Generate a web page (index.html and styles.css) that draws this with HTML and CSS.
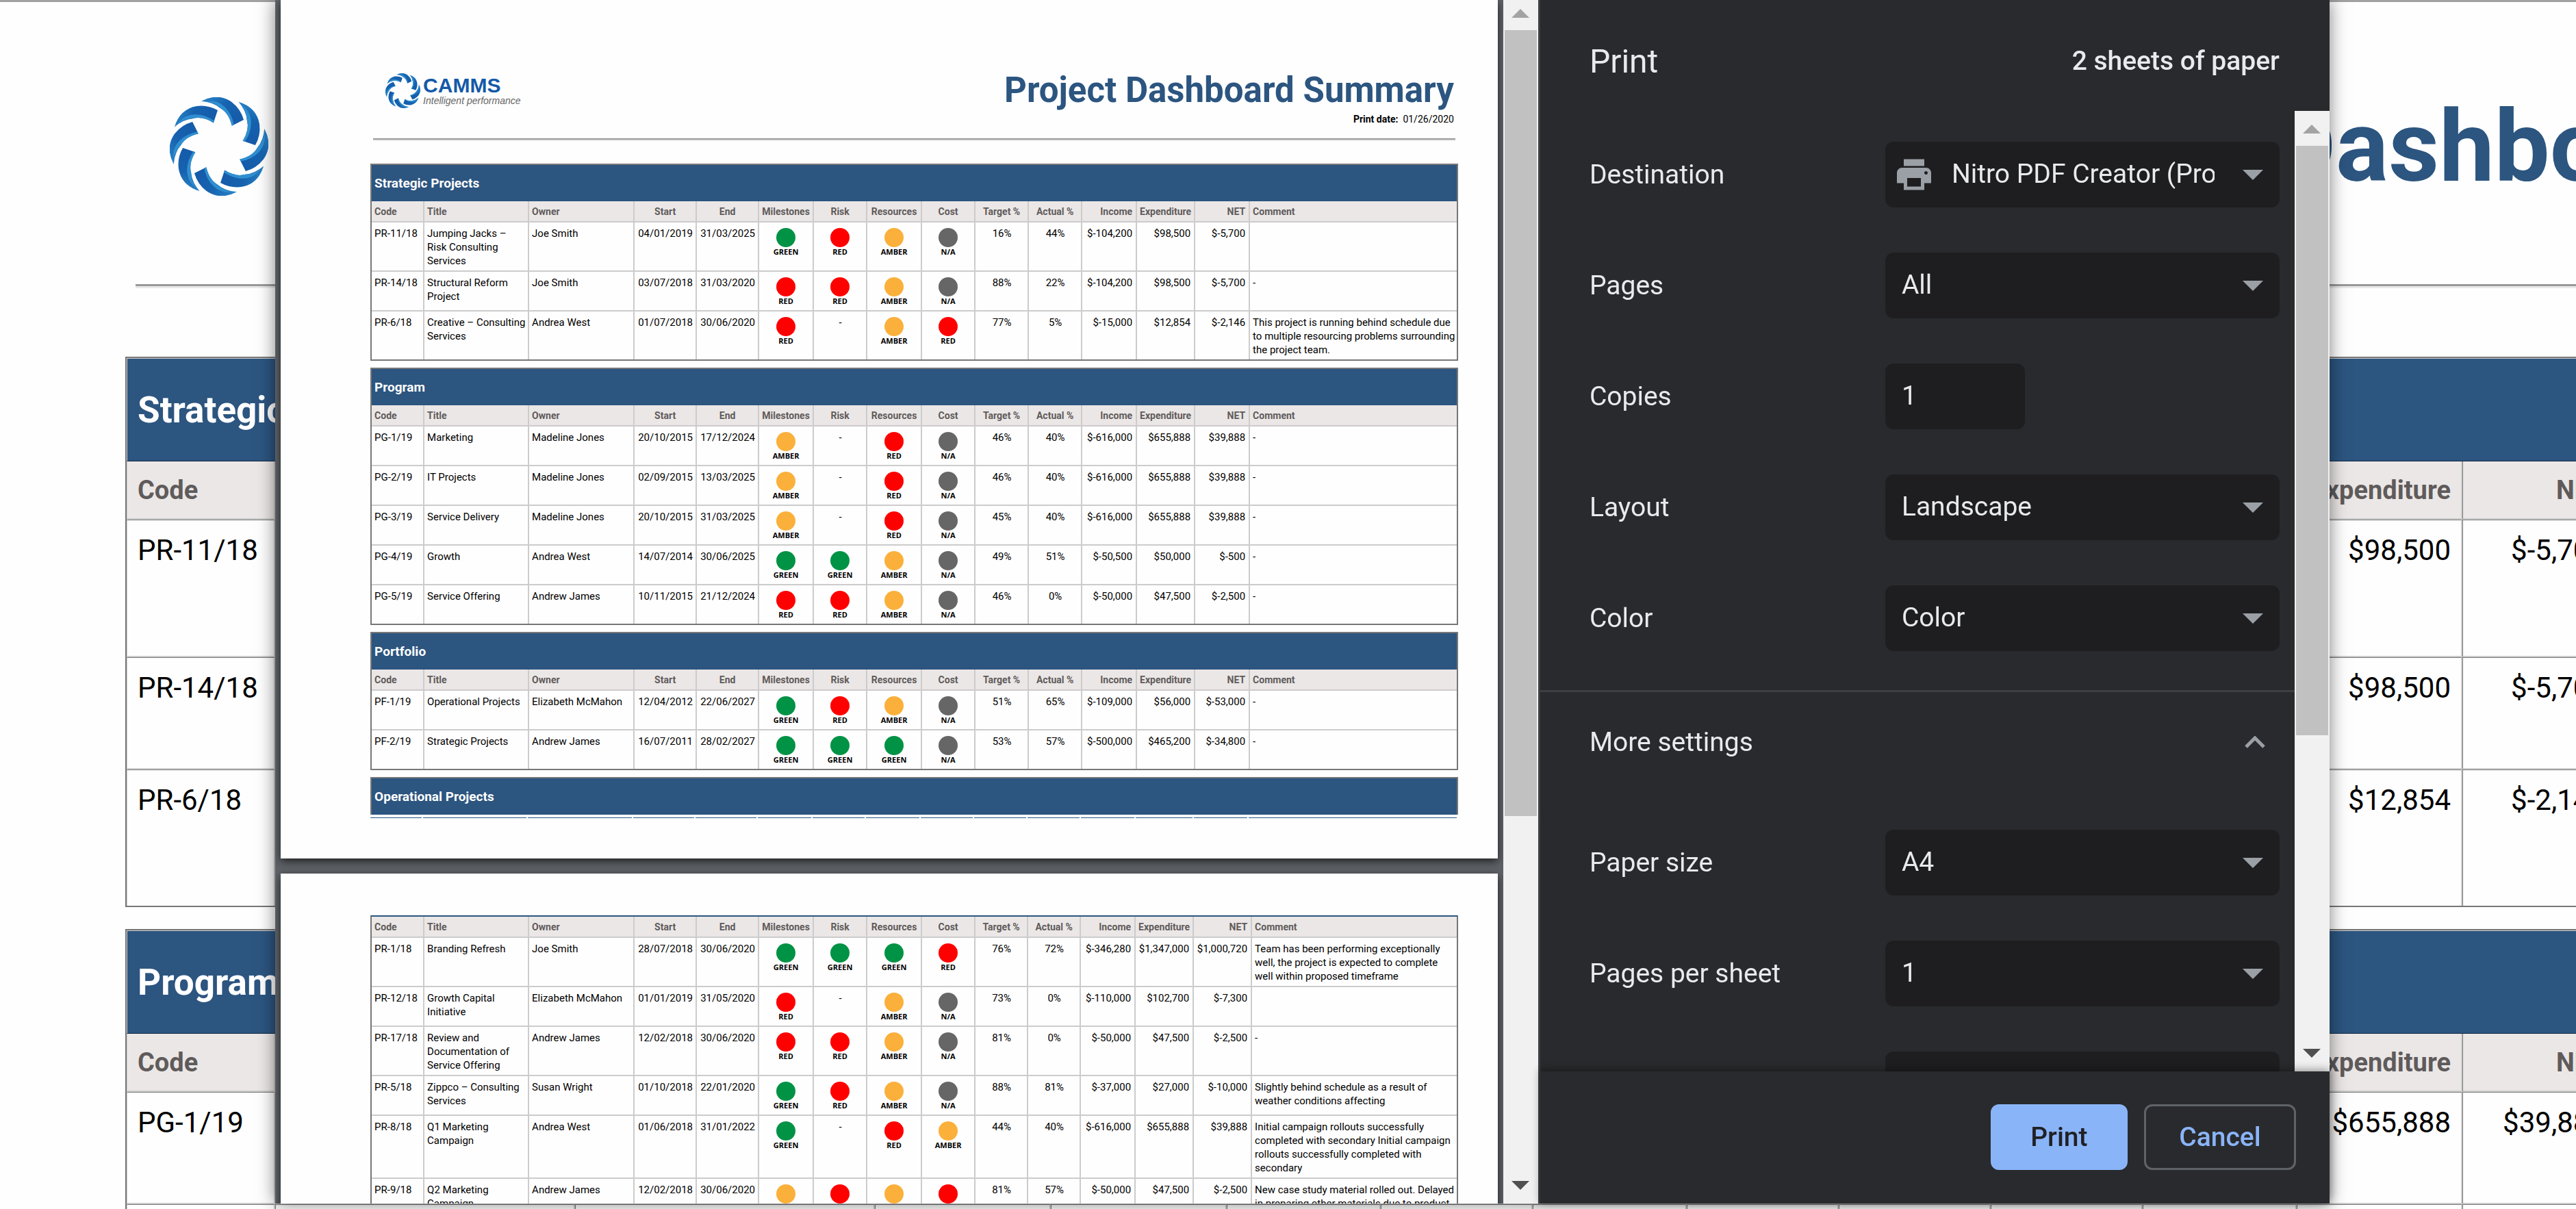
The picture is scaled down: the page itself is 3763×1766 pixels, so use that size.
FILE: index.html
```html
<!DOCTYPE html>
<html lang="en">

<head>
    <meta charset="UTF-8">
    <meta name="viewport" content="width=device-width, initial-scale=1.0">
    <title>Project Dashboard Summary</title>
    <link rel="stylesheet" href="styles.css">
</head>

<body>
    <svg width="0" height="0" class="defs" aria-hidden="true">
        <defs>
            <linearGradient id="bladeFill" x1="0" y1="1" x2="1" y2="0">
                <stop offset="0" stop-color="#1459a8" />
                <stop offset="0.6" stop-color="#1763b0" />
                <stop offset="1" stop-color="#2a86c8" />
            </linearGradient>
            <g id="blade">
                <path fill="url(#bladeFill)" d="M46-18Q55-1 45 13Q38 22 27 25L21 13Q34 10 39 1Q45-6 46-18Z" />
                <path fill="#2f8fd0" d="M46-14Q48-2 40 6Q33 13 22 15L21 13Q34 10 39 1Q45-5 46-14Z" />
            </g>
            <symbol id="swirl" viewBox="-50 -50 100 100">
                <use href="#blade" />
                <use href="#blade" transform="rotate(45)" />
                <use href="#blade" transform="rotate(90)" />
                <use href="#blade" transform="rotate(135)" />
                <use href="#blade" transform="rotate(180)" />
                <use href="#blade" transform="rotate(225)" />
                <use href="#blade" transform="rotate(270)" />
                <use href="#blade" transform="rotate(315)" />
            </symbol>
        </defs>
    </svg>

    <main class="report large">
        <header class="report-header">
            <div class="logo">
                <svg class="logo-mark"><use href="#swirl" /></svg>
            </div>
            <div class="report-title">
                <h1>Project Dashboard Summary</h1>
            </div>
        </header>
        <hr>
        <div data-groups="strategic program"></div>
    </main>

    <div class="overlay">
        <div class="dialog" role="dialog" aria-label="Print">
            <section class="preview">
                <div class="pages">
                    <div class="page report">
                        <header class="report-header">
                            <div class="logo">
                                <svg class="logo-mark"><use href="#swirl" /></svg>
                                <div class="logo-text">
                                    <span class="logo-name">CAMMS</span>
                                    <span class="logo-tag">Intelligent performance</span>
                                </div>
                            </div>
                            <div class="report-title">
                                <h2>Project Dashboard Summary</h2>
                                <p><b>Print date:</b>&nbsp; 01/26/2020</p>
                            </div>
                        </header>
                        <hr>
                        <div data-groups="strategic program portfolio operational"></div>
                    </div>
                    <div class="page report second">
                        <div data-groups="operationalRows"></div>
                    </div>
                </div>
                <div class="scrollbar">
                    <span class="arrow up"></span>
                    <span class="thumb"></span>
                    <span class="arrow down"></span>
                </div>
            </section>

            <form class="sidebar">
                <div class="sidebar-header">
                    <h2>Print</h2>
                    <span>2 sheets of paper</span>
                </div>
                <div class="sidebar-body">
                    <div class="settings">
                        <div class="row">
                            <label for="destination">Destination</label>
                            <div class="select with-icon">
                                <svg class="printer" viewBox="2 3 20 18">
                                    <path fill="#9aa0a6" d="M19 8H5c-1.660 0-3 1.340-3 3v6h4v4h12v-4h4v-6c0-1.660-1.340-3-3-3zm-3 11H8v-5h8v5zm3-7c-.55 0-1-.45-1-1s.45-1 1-1 1 .45 1 1-.45 1-1 1zm-1-9H6v4h12V3z" />
                                </svg>
                                <select id="destination">
                                    <option>Nitro PDF Creator (Pro 12)</option>
                                </select>
                            </div>
                        </div>
                        <div class="row">
                            <label for="pages">Pages</label>
                            <div class="select">
                                <select id="pages">
                                    <option>All</option>
                                    <option>Custom</option>
                                </select>
                            </div>
                        </div>
                        <div class="row">
                            <label for="copies">Copies</label>
                            <div class="field"><input id="copies" type="text" value="1"></div>
                        </div>
                        <div class="row">
                            <label for="layout">Layout</label>
                            <div class="select">
                                <select id="layout">
                                    <option>Landscape</option>
                                    <option>Portrait</option>
                                </select>
                            </div>
                        </div>
                        <div class="row">
                            <label for="color">Color</label>
                            <div class="select">
                                <select id="color">
                                    <option>Color</option>
                                    <option>Black and white</option>
                                </select>
                            </div>
                        </div>
                        <button type="button" class="more">
                            More settings
                            <svg class="chevron" viewBox="0 0 30 18">
                                <path d="M2 16L15 3L28 16" fill="none" stroke="#9aa0a6" stroke-width="5" />
                            </svg>
                        </button>
                        <div class="row">
                            <label for="paper">Paper size</label>
                            <div class="select">
                                <select id="paper">
                                    <option>A4</option>
                                    <option>Letter</option>
                                </select>
                            </div>
                        </div>
                        <div class="row">
                            <label for="persheet">Pages per sheet</label>
                            <div class="select">
                                <select id="persheet">
                                    <option>1</option>
                                    <option>2</option>
                                </select>
                            </div>
                        </div>
                        <div class="row">
                            <div class="select last">
                                <select aria-label="Margins"></select>
                            </div>
                        </div>
                    </div>
                    <div class="scrollbar">
                        <span class="arrow up"></span>
                        <span class="thumb"></span>
                        <span class="arrow down"></span>
                    </div>
                </div>
                <div class="sidebar-footer">
                    <button type="button" class="btn primary">Print</button>
                    <button type="button" class="btn">Cancel</button>
                </div>
            </form>
        </div>
    </div>

    <script src="script.js"></script>
</body>

</html>
```
FILE: styles.css
```css
* {
    box-sizing: border-box;
}

body {
    margin: 0;
    height: 100vh;
    overflow: hidden;
    background: #fefefe;
    font-family: Roboto, sans-serif;
    color: #000;
}

h1,
h2,
p {
    margin: 0;
}

.defs {
    display: block;
}

/* report, shared by the page behind and the print preview */
.report-header {
    display: flex;
    justify-content: space-between;
    align-items: flex-start;
    margin: 0 6px 0 4px;
}

.logo {
    display: flex;
    gap: 4px;
    margin: 6px 0 0 18px;
}

.logo-mark {
    width: 51px;
    height: 51px;
}

.logo-text {
    display: flex;
    flex-direction: column;
    padding-top: 4px;
    font-family: "Liberation Sans", sans-serif;
    white-space: nowrap;
}

.logo-name {
    font-size: 30px;
    line-height: 28px;
    font-weight: bold;
    color: #1459a8;
}

.logo-tag {
    font-size: 14px;
    line-height: 16px;
    font-style: italic;
    color: #666;
}

.report-title {
    text-align: right;
    white-space: nowrap;
}

.report-title h1,
.report-title h2 {
    font-size: 51px;
    line-height: 62px;
    font-weight: bold;
    color: #2c5580;
}

.report-title p {
    margin-top: 1px;
    font-size: 14px;
    line-height: 20px;
}

.report hr {
    height: 4px;
    margin: 18px 4px 33px;
    border: 0;
    border-top: 2px solid #999;
    background: #e9e9e9;
}

.report table {
    width: 100%;
    margin-bottom: 10px;
    table-layout: fixed;
    border: 2px solid #777;
    border-collapse: separate;
    border-spacing: 0;
    font-size: 15px;
    line-height: 20px;
}

.report th,
.report td {
    padding: 6px 3px 4px 4px;
    border-right: 2px solid #ccc;
    border-bottom: 2px solid #ccc;
    text-align: left;
    vertical-align: top;
}

.report tr > :last-child {
    padding-right: 0;
    border-right: 0;
}

.report tbody tr:last-child td {
    border-bottom: 0;
}

.report th {
    height: 31px;
    padding: 0 4px;
    background: #ebe7e6;
    color: #5f5b5b;
    font-size: 14px;
    vertical-align: middle;
    white-space: nowrap;
}

.report th.group {
    height: 53px;
    border-bottom: 0;
    background: #2c5580;
    color: #fff;
    font-size: 19px;
}

.report .mid {
    text-align: center;
    white-space: nowrap;
}

.report .num {
    padding-right: 5px;
    text-align: right;
    white-space: nowrap;
}

.report td.status {
    padding: 8px 0 6px;
    text-align: center;
    font: bold 11px/14px "Open Sans", sans-serif;
}

.dot {
    display: block;
    width: 28px;
    height: 28px;
    margin: 0 auto;
    border-radius: 50%;
}

.dot.GREEN {
    background: #009245;
}

.dot.RED {
    background: #fe0000;
}

.dot.AMBER {
    background: #fbb03b;
}

.dot.NA {
    background: #666;
}

.c-code {
    width: 77px;
}

.c-title {
    width: 153px;
}

.c-owner {
    width: 154px;
}

.c-start,
.c-end {
    width: 91px;
}

.c-milestones,
.c-resources,
.c-income,
.c-net {
    width: 80px;
}

.c-risk,
.c-cost,
.c-target,
.c-actual {
    width: 78px;
}

.c-expenditure {
    width: 85px;
}

/* group heading whose rows continue on the next page */
.report table.open {
    margin-bottom: 4px;
    border-bottom: 0;
}

.report table.cut {
    margin: 0;
    border: 0;
}

.report .cut td {
    height: 1px;
    padding: 0;
    border-right: 2px solid #fff;
    background: #2c5580;
}

.second .c-target,
.second .c-actual {
    width: 77px;
}

.second .c-net {
    width: 85px;
}

.report.second table {
    border-top-color: #2c5580;
}

/* page behind the dialog */
.large {
    width: 125%;
    padding-left: 183px;
    border-top: 3px solid #a2a2a2;
}

.large .report-header {
    height: 410px;
    margin: 0 30px 0 15px;
    padding-top: 128px;
}

.large .logo {
    margin: 11px 0 0 50px;
}

.large .logo-mark {
    width: 144px;
    height: 144px;
}

.large .report-title h1 {
    font-size: 144px;
    line-height: 168px;
}

.large hr {
    height: 6px;
    margin: 2px 15px 100px;
    border-top-width: 3px;
}

.large table {
    margin-bottom: 32px;
    font-size: 42px;
    line-height: 56px;
}

.large td {
    padding: 16px 15px 14px;
    border-top: 1px solid #777;
    border-left: 1px solid #777;
}

.large th {
    height: 85px;
    padding: 0 15px;
    border-left: 1px solid #777;
    font-size: 38px;
}

.large .num {
    padding-right: 15px;
}

.large tr > :first-child {
    border-left-color: #ccc;
}

.large th.group {
    height: 151px;
    border-top: 1px solid #ccc;
    border-bottom: 1px solid #0f2744;
    font-size: 53px;
}

.large td.status {
    padding: 23px 0 18px;
    font-size: 31px;
    line-height: 40px;
}

.large .dot {
    width: 80px;
    height: 80px;
}

.large .c-code {
    width: 217px;
}

.large .c-title,
.large .c-owner {
    width: 438px;
}

.large .c-start,
.large .c-end {
    width: 257px;
}

.large .c-milestones,
.large .c-resources,
.large .c-income {
    width: 225px;
}

.large .c-risk,
.large .c-cost,
.large .c-target,
.large .c-actual {
    width: 222px;
}

.large .c-expenditure {
    width: 242px;
}

.large .c-net {
    width: 226px;
}

/* print dialog */
.overlay {
    position: fixed;
    inset: 0;
    display: flex;
    justify-content: center;
    padding: 0 0 8px 42px;
}

.dialog {
    display: flex;
    width: calc(80% + 24px);
    height: 100%;
    background: #292a2d;
    box-shadow: 0 0 24px rgba(0, 0, 0, 0.5);
}

.preview {
    display: flex;
    flex: 1;
    min-width: 0;
    overflow: hidden;
    background: #5f6368;
}

.pages {
    flex: 1;
    min-width: 0;
    padding: 0 8px;
}

.page {
    margin-bottom: 22px;
    background: #fefefe;
    box-shadow: 0 4px 12px rgba(0, 0, 0, 0.7);
    padding: 101px 58px 59px 131px;
}

.page.second {
    padding-top: 61px;
}

.scrollbar {
    display: flex;
    flex-direction: column;
    align-items: center;
    flex: 0 0 51px;
    background: #f1f1f1;
}

.scrollbar .thumb {
    width: 47px;
    background: #c1c1c1;
}

.preview .thumb {
    flex: 0 0 1148px;
}

.preview .arrow.up {
    margin: 13px 0 18px;
}

.arrow {
    border: 13px solid transparent;
    border-top-width: 0;
    border-bottom-width: 0;
}

.arrow.up {
    margin: 20px 0 18px;
    border-bottom: 13px solid #a3a3a3;
}

.arrow.down {
    margin: auto 0 20px;
    border-top: 13px solid #505050;
}

.sidebar {
    display: flex;
    flex-direction: column;
    flex: 0 0 1156px;
    border-left: 3px solid #3c4043;
    color: #e8eaed;
    font-size: 39px;
}

.sidebar-header {
    display: flex;
    flex: 0 0 162px;
    align-items: center;
    justify-content: space-between;
    padding: 16px 73px 0 72px;
    font-weight: 500;
}

.sidebar-header h2 {
    font-size: 48px;
    font-weight: 400;
}

.sidebar-body {
    display: flex;
    flex: 1;
    min-height: 0;
}

.settings {
    flex: 1;
    overflow: hidden;
    padding-top: 12px;
}

.sidebar-body .thumb {
    flex: 0 0 861px;
}

.row {
    display: flex;
    align-items: center;
    height: 162px;
    padding: 0 22px 0 72px;
}

.row label {
    flex: 1;
}

.select,
.field {
    position: relative;
    flex: 0 0 576px;
}

.select.last {
    margin-left: auto;
}

.select select,
.field input {
    display: block;
    width: 100%;
    height: 96px;
    padding: 0 95px 2px 24px;
    border: 0;
    border-radius: 12px;
    outline: 0;
    appearance: none;
    background: #1e1e20;
    color: #e8eaed;
    font: 39px Roboto, sans-serif;
}

.field input {
    width: 204px;
    padding-right: 24px;
}

.select::after {
    content: "";
    position: absolute;
    top: 41px;
    right: 24px;
    border: 15px solid transparent;
    border-top-color: #9aa0a6;
    border-bottom-width: 0;
    pointer-events: none;
}

.select.with-icon select {
    padding-left: 97px;
}

.printer {
    position: absolute;
    top: 25px;
    left: 17px;
    width: 50px;
    height: 46px;
}

.more {
    display: flex;
    align-items: center;
    justify-content: space-between;
    width: 100%;
    height: 171px;
    margin-top: 24px;
    padding: 0 43px 23px 72px;
    border: 0;
    border-top: 3px solid #3c4043;
    background: none;
    color: inherit;
    font: inherit;
}

.chevron {
    width: 30px;
    height: 18px;
}

.sidebar-footer {
    position: relative;
    display: flex;
    justify-content: flex-end;
    gap: 24px;
    flex: 0 0 193px;
    padding: 48px 49px 0 0;
    background: #292a2d;
    box-shadow: 0 -2px 12px rgba(0, 0, 0, 0.4);
}

.btn {
    width: 222px;
    height: 96px;
    border: 3px solid #5f6368;
    border-radius: 12px;
    background: none;
    color: #8ab4f8;
    font: 500 39px Roboto, sans-serif;
}

.btn.primary {
    width: 200px;
    border-color: #8ab4f8;
    background: #8ab4f8;
    color: #202124;
}
```
FILE: script.js
```js
const columns = ["Code", "Title", "Owner", "Start", "End", "Milestones", "Risk", "Resources", "Cost",
    "Target %", "Actual %", "Income", "Expenditure", "NET", "Comment"];
const colNames = ["code", "title", "owner", "start", "end", "milestones", "risk", "resources", "cost",
    "target", "actual", "income", "expenditure", "net", "comment"];
const labels = { G: "GREEN", R: "RED", A: "AMBER", N: "N/A" };

const groups = {
    strategic: {
        name: "Strategic Projects",
        rows: [
            ["PR-11/18", "Jumping Jacks – Risk Consulting Services", "Joe Smith", "04/01/2019", "31/03/2025", "G", "R", "A", "N", "16%", "44%", "$-104,200", "$98,500", "$-5,700", ""],
            ["PR-14/18", "Structural Reform Project", "Joe Smith", "03/07/2018", "31/03/2020", "R", "R", "A", "N", "88%", "22%", "$-104,200", "$98,500", "$-5,700", "-"],
            ["PR-6/18", "Creative – Consulting Services", "Andrea West", "01/07/2018", "30/06/2020", "R", "-", "A", "R", "77%", "5%", "$-15,000", "$12,854", "$-2,146", "This project is running behind schedule due to multiple resourcing problems surrounding the project team."]
        ]
    },
    program: {
        name: "Program",
        rows: [
            ["PG-1/19", "Marketing", "Madeline Jones", "20/10/2015", "17/12/2024", "A", "-", "R", "N", "46%", "40%", "$-616,000", "$655,888", "$39,888", "-"],
            ["PG-2/19", "IT Projects", "Madeline Jones", "02/09/2015", "13/03/2025", "A", "-", "R", "N", "46%", "40%", "$-616,000", "$655,888", "$39,888", "-"],
            ["PG-3/19", "Service Delivery", "Madeline Jones", "20/10/2015", "31/03/2025", "A", "-", "R", "N", "45%", "40%", "$-616,000", "$655,888", "$39,888", "-"],
            ["PG-4/19", "Growth", "Andrea West", "14/07/2014", "30/06/2025", "G", "G", "A", "N", "49%", "51%", "$-50,500", "$50,000", "$-500", "-"],
            ["PG-5/19", "Service Offering", "Andrew James", "10/11/2015", "21/12/2024", "R", "R", "A", "N", "46%", "0%", "$-50,000", "$47,500", "$-2,500", "-"]
        ]
    },
    portfolio: {
        name: "Portfolio",
        rows: [
            ["PF-1/19", "Operational Projects", "Elizabeth McMahon", "12/04/2012", "22/06/2027", "G", "R", "A", "N", "51%", "65%", "$-109,000", "$56,000", "$-53,000", "-"],
            ["PF-2/19", "Strategic Projects", "Andrew James", "16/07/2011", "28/02/2027", "G", "G", "G", "N", "53%", "57%", "$-500,000", "$465,200", "$-34,800", "-"]
        ]
    },
    operational: { name: "Operational Projects" },
    operationalRows: {
        rows: [
            ["PR-1/18", "Branding Refresh", "Joe Smith", "28/07/2018", "30/06/2020", "G", "G", "G", "R", "76%", "72%", "$-346,280", "$1,347,000", "$1,000,720", "Team has been performing exceptionally well, the project is expected to complete well within proposed timeframe"],
            ["PR-12/18", "Growth Capital Initiative", "Elizabeth McMahon", "01/01/2019", "31/05/2020", "R", "-", "A", "N", "73%", "0%", "$-110,000", "$102,700", "$-7,300", ""],
            ["PR-17/18", "Review and Documentation of Service Offering", "Andrew James", "12/02/2018", "30/06/2020", "R", "R", "A", "N", "81%", "0%", "$-50,000", "$47,500", "$-2,500", "-"],
            ["PR-5/18", "Zippco – Consulting Services", "Susan Wright", "01/10/2018", "22/01/2020", "G", "R", "A", "N", "88%", "81%", "$-37,000", "$27,000", "$-10,000", "Slightly behind schedule as a result of weather conditions affecting"],
            ["PR-8/18", "Q1 Marketing Campaign", "Andrea West", "01/06/2018", "31/01/2022", "G", "-", "R", "A", "44%", "40%", "$-616,000", "$655,888", "$39,888", "Initial campaign rollouts successfully completed with secondary Initial campaign rollouts successfully completed with secondary"],
            ["PR-9/18", "Q2 Marketing Campaign", "Andrew James", "12/02/2018", "30/06/2020", "A", "R", "A", "R", "81%", "57%", "$-50,000", "$47,500", "$-2,500", "New case study material rolled out. Delayed in preparing other materials due to product"]
        ]
    }
};

const colgroup = "<colgroup>" + colNames.map(n => `<col class="c-${n}">`).join("") + "</colgroup>";

function align(i) {
    if (i >= 3 && i <= 10) return "mid";
    if (i >= 11 && i <= 13) return "num";
    return "";
}

function cell(value, i) {
    if (i >= 5 && i <= 8 && labels[value]) {
        const label = labels[value];
        return `<td class="status"><span class="dot ${label.replace("/", "")}"></span>${label}</td>`;
    }
    return `<td class="${align(i)}">${value}</td>`;
}

function renderGroup(group) {
    const heading = group.name ? `<tr><th class="group" colspan="15">${group.name}</th></tr>` : "";
    if (!group.rows) {
        return `<table class="open">${colgroup}<thead>${heading}</thead></table>
            <table class="cut">${colgroup}<tr>${"<td></td>".repeat(15)}</tr></table>`;
    }
    const head = columns.map((c, i) => `<th class="${align(i)}">${c}</th>`).join("");
    const body = group.rows.map(r => `<tr>${r.map(cell).join("")}</tr>`).join("");
    return `<table>${colgroup}<thead>${heading}<tr>${head}</tr></thead><tbody>${body}</tbody></table>`;
}

document.querySelectorAll("[data-groups]").forEach(el => {
    el.innerHTML = el.dataset.groups.split(" ").map(name => renderGroup(groups[name])).join("");
});
```
